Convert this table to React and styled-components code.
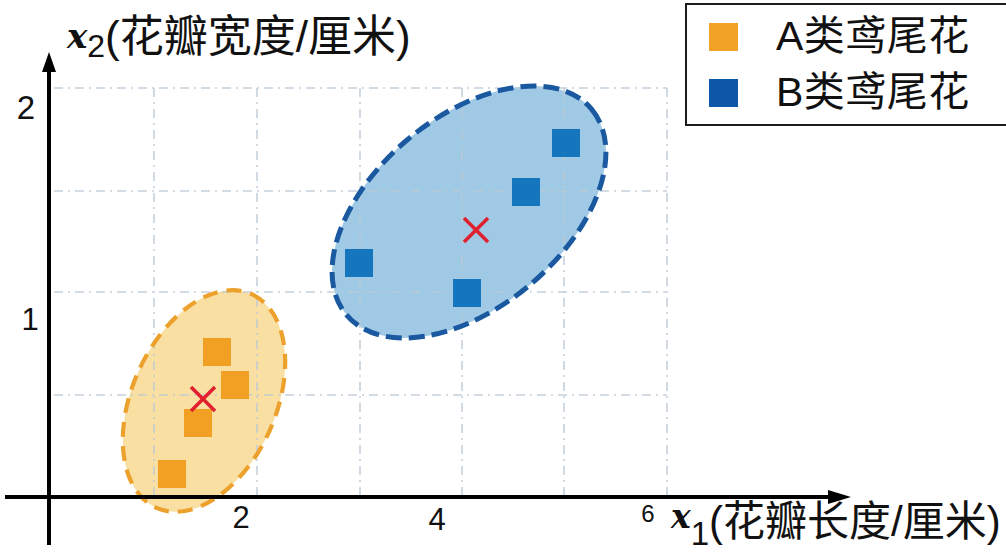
import React from "react";
import styled, { createGlobalStyle } from "styled-components";

const GlobalStyle = createGlobalStyle`
  html, body {
    margin: 0;
    padding: 0;
    background: #ffffff;
  }
`;

const CJK = `"Liberation Sans", "Noto Sans CJK SC", sans-serif`;

const Figure = styled.div`
  position: relative;
  width: 1006px;
  height: 552px;
  overflow: hidden;
  background: #ffffff;
  font-family: ${CJK};
`;

const Chart = styled.svg`
  display: block;
`;

const Legend = styled.div`
  position: absolute;
  left: 685px;
  top: 3px;
  width: 301px;
  height: 119px;
  border: 2px solid #1c1c1c;
  background: #ffffff;
  display: flex;
  flex-direction: column;
  justify-content: center;
  gap: 19px;
  padding-left: 22px;
  box-sizing: content-box;
`;

const LegendRow = styled.div`
  display: flex;
  align-items: center;
  height: 37px;
`;

const Swatch = styled.span`
  width: 29px;
  height: 28px;
  background: ${(p) => p.color};
  margin-right: 38px;
  flex: none;
`;

const LegendLabel = styled.span`
  font-family: ${CJK};
  font-size: 41px;
  line-height: 1;
  color: #111111;
  letter-spacing: 0.5px;
`;

const gridXs = [154, 257, 360, 462, 564, 667];
const gridYs = [88, 191, 292, 395];

const blue = [
  [359, 263],
  [467, 293],
  [526, 192],
  [566, 143],
];
const orange = [
  [217, 352],
  [235, 385],
  [198, 423],
  [172, 474],
];

const Square = ({ x, y, color }) => (
  <rect x={x - 14} y={y - 14} width={28} height={28} fill={color} />
);

const Cross = ({ x, y }) => (
  <g stroke="#e0202e" strokeWidth={3.6} strokeLinecap="butt">
    <line x1={x - 12} y1={y - 12} x2={x + 12} y2={y + 12} />
    <line x1={x + 12} y1={y - 12} x2={x - 12} y2={y + 12} />
  </g>
);

const gridDash = "9 5 2 5";

export default function App() {
  return (
    <>
      <GlobalStyle />
      <Figure>
        <Chart width="1006" height="552" viewBox="0 0 1006 552">
          {/* cluster fills */}
          <ellipse
            cx={469}
            cy={212}
            rx={160}
            ry={95}
            transform="rotate(-40 469 212)"
            fill="#9fc9e5"
          />
          <ellipse
            cx={204}
            cy={401}
            rx={117}
            ry={72}
            transform="rotate(-66 204 401)"
            fill="#fadfa3"
          />

          {/* grid */}
          <g stroke="#bccad6" strokeWidth={1.6} strokeDasharray={gridDash} opacity={0.85}>
            {gridYs.map((y) => (
              <line key={"h" + y} x1={54} y1={y} x2={667} y2={y} />
            ))}
            {gridXs.map((x) => (
              <line key={"v" + x} x1={x} y1={88} x2={x} y2={495} />
            ))}
          </g>

          {/* cluster outlines */}
          <ellipse
            cx={469}
            cy={212}
            rx={160}
            ry={95}
            transform="rotate(-40 469 212)"
            fill="none"
            stroke="#1a58a0"
            strokeWidth={5}
            strokeDasharray="16 7"
          />
          <ellipse
            cx={204}
            cy={401}
            rx={117}
            ry={72}
            transform="rotate(-66 204 401)"
            fill="none"
            stroke="#eba12c"
            strokeWidth={4.2}
            strokeDasharray="15 9"
          />

          {/* axes */}
          <g stroke="#000" strokeWidth={4}>
            <line x1={49} y1={68} x2={49} y2={545} />
            <line x1={5} y1={497} x2={830} y2={497} />
          </g>
          <polygon points="49,52 42,72 56,72" fill="#000" />
          <polygon points="851,497 828,490 828,504" fill="#000" />

          {/* points */}
          {blue.map(([x, y]) => (
            <Square key={"b" + x} x={x} y={y} color="#1576bd" />
          ))}
          {orange.map(([x, y]) => (
            <Square key={"o" + x} x={x} y={y} color="#f2a024" />
          ))}
          <Cross x={476} y={230} />
          <Cross x={203} y={399} />

          {/* tick labels */}
          <g fontFamily={CJK} fill="#111">
            <text x={26} y={119} fontSize={33} textAnchor="middle">2</text>
            <text x={30} y={330} fontSize={31} textAnchor="middle">1</text>
            <text x={241} y={528} fontSize={31} textAnchor="middle">2</text>
            <text x={437} y={530} fontSize={31} textAnchor="middle">4</text>
            <text x={648} y={522} fontSize={24} textAnchor="middle">6</text>
          </g>

          {/* axis titles */}
          <text x={67} y={52} fontFamily={CJK} fontSize={44} fill="#111">
            <tspan
              fontFamily='"DejaVu Serif", serif'
              fontWeight="bold"
              fontStyle="italic"
              fontSize={34}
              dy={-4}
            >
              x
            </tspan>
            <tspan fontSize={32} dy={9}>2</tspan>
            <tspan dy={-5}>(花瓣宽度/厘米)</tspan>
          </text>
          <text x={671} y={536} fontFamily={CJK} fontSize={42} fill="#111">
            <tspan
              fontFamily='"DejaVu Serif", serif'
              fontWeight="bold"
              fontStyle="italic"
              fontSize={33}
              dy={-8}
            >
              x
            </tspan>
            <tspan fontSize={33} dy={17}>1</tspan>
            <tspan dy={-9}>(花瓣长度/厘米)</tspan>
          </text>
        </Chart>

        <Legend>
          <LegendRow>
            <Swatch color="#f2a226" />
            <LegendLabel>A类鸢尾花</LegendLabel>
          </LegendRow>
          <LegendRow>
            <Swatch color="#0d58a8" />
            <LegendLabel>B类鸢尾花</LegendLabel>
          </LegendRow>
        </Legend>
      </Figure>
    </>
  );
}
